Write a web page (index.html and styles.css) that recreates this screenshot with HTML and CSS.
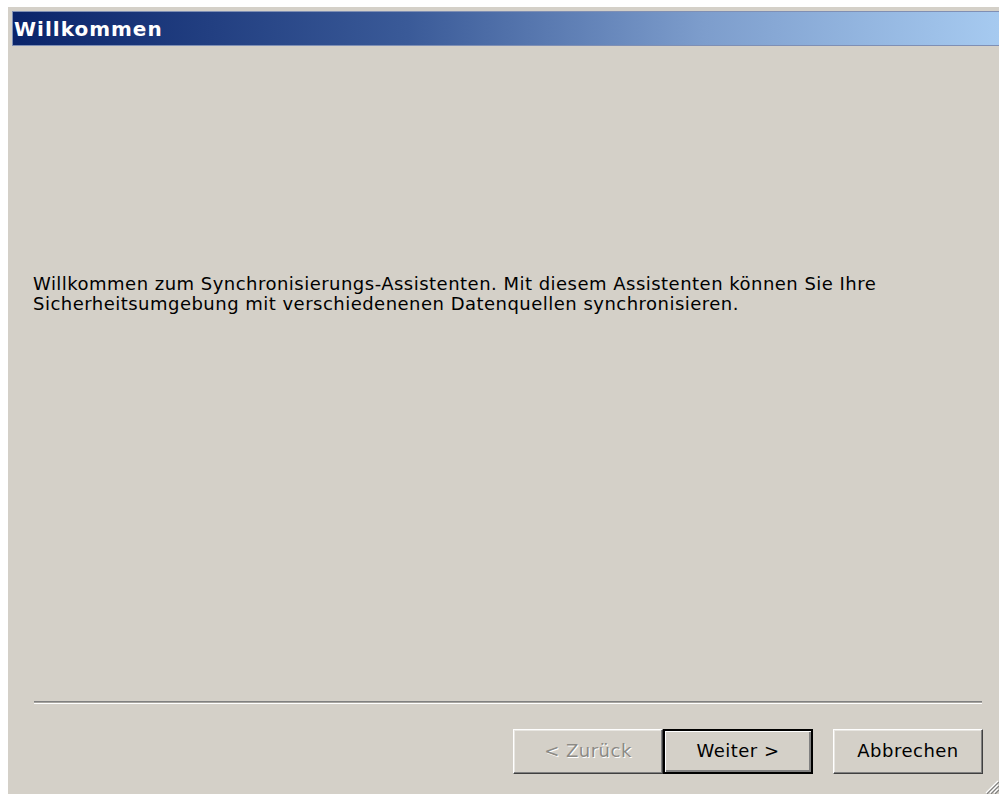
FILE: index.html
```html
<!DOCTYPE html>
<html lang="de">
<head>
<meta charset="utf-8">
<title>Willkommen</title>
<link rel="stylesheet" href="styles.css">
</head>
<body>
<div class="dialog">
  <div class="titlebar"><span class="title">Willkommen</span></div>
  <div class="content">
    <p class="message">Willkommen zum Synchronisierungs-Assistenten. Mit diesem Assistenten können Sie Ihre<br>Sicherheitsumgebung mit verschiedenenen Datenquellen synchronisieren.</p>
  </div>
  <div class="separator"></div>
  <div class="buttons">
    <div class="nav-pair">
      <button class="btn" disabled>&lt; Zurück</button>
      <button class="btn btn-default">Weiter &gt;</button>
    </div>
    <button class="btn">Abbrechen</button>
  </div>
  <svg class="grip" width="16" height="16" viewBox="0 0 16 16">
    <g stroke-width="1.2">
      <line x1="15" y1="3" x2="3" y2="15" stroke="#fff"/>
      <line x1="16" y1="4" x2="4" y2="16" stroke="#808080"/>
      <line x1="15" y1="7" x2="7" y2="15" stroke="#fff"/>
      <line x1="16" y1="8" x2="8" y2="16" stroke="#808080"/>
      <line x1="15" y1="11" x2="11" y2="15" stroke="#fff"/>
      <line x1="16" y1="12" x2="12" y2="16" stroke="#808080"/>
    </g>
  </svg>
</div>
</body>
</html>
```

FILE: styles.css
```css
html, body {
  margin: 0;
  height: 100%;
}

body {
  background: #ffffff;
  padding: 7px 0 0 8px;
  box-sizing: border-box;
  font-family: "DejaVu Sans", Tahoma, sans-serif;
  overflow: hidden;
}

.dialog {
  position: relative;
  background: #d4d0c8;
  height: 787px;
  box-sizing: border-box;
  padding: 4px 0 0 4px;
  display: flex;
  flex-direction: column;
}

.titlebar {
  height: 35px;
  box-sizing: border-box;
  border: 1px solid #7f8fb4;
  border-right: none;
  background: linear-gradient(to right, #0a246a 0%, #3a5a98 40%, #7d9dcc 70%, #a6caf0 100%);
  display: flex;
  align-items: center;
  padding-left: 1px;
}

.title {
  color: #ffffff;
  font-weight: bold;
  font-size: 20px;
  letter-spacing: 1px;
}

.content {
  flex: 1;
}

.message {
  margin: 228px 0 0 21px;
  font-size: 18px;
  line-height: 20px;
  color: #000000;
  letter-spacing: 0.48px;
}

/* etched rule above the button row */
.separator {
  margin: 0 17px 0 22px;
  height: 1px;
  background: #a8a6a1;
  border-top: 1px solid #808080;
  border-bottom: 1px solid #ffffff;
}

.buttons {
  display: flex;
  justify-content: flex-end;
  gap: 20px;
  margin: 25px 16px 20px 0;
}

.nav-pair {
  display: flex;
}

.btn {
  width: 150px;
  height: 45px;
  box-sizing: border-box;
  background: #d4d0c8;
  font-family: inherit;
  font-size: 18px;
  letter-spacing: 0.5px;
  color: #000000;
  border: 1px solid;
  border-color: #ffffff #404040 #404040 #ffffff;
  box-shadow: inset -1px -1px 0 #808080, inset 1px 1px 0 #e8e6e1;
  padding: 0 0 2px 0;
  margin: 0;
}

.btn:disabled {
  color: #8c8a85;
  text-shadow: 1px 1px 0 #ffffff;
}

.btn-default {
  border: 2px solid #000000;
  box-shadow: inset 1px 1px 0 #ffffff, inset -2px -2px 0 #808080;
}

.grip {
  position: absolute;
  right: 0;
  bottom: 0;
}
```
